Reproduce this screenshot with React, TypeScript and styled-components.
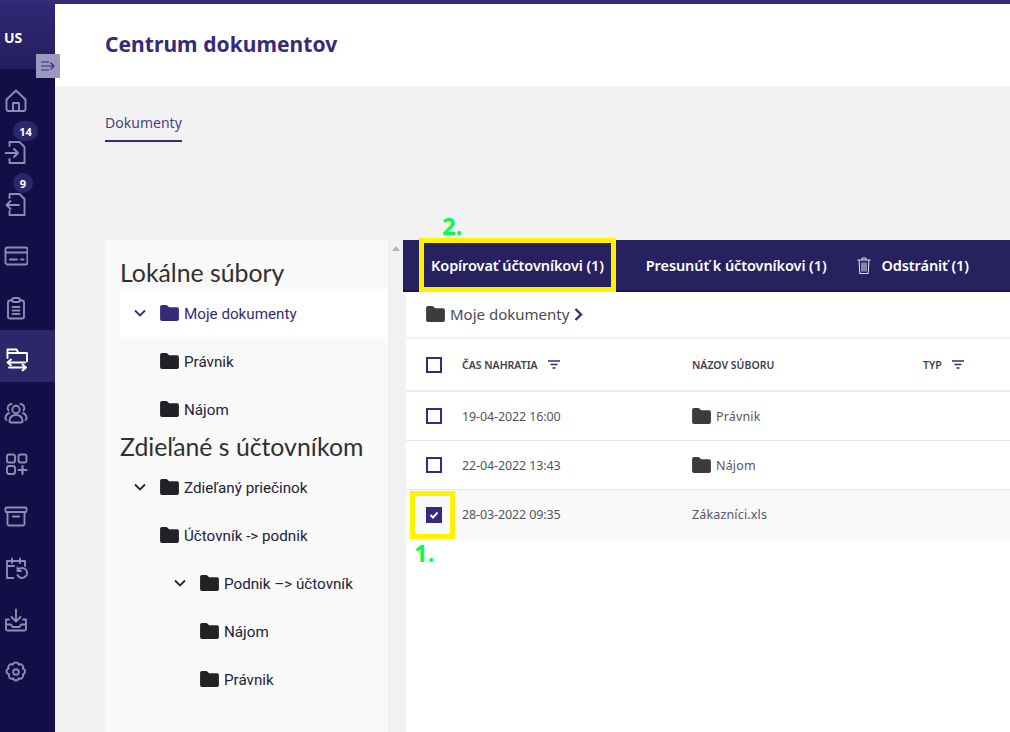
import React from "react"
import styled, { createGlobalStyle } from "styled-components"

const GlobalStyle = createGlobalStyle`
	html, body {
		margin: 0;
		height: 100%;
		overflow: hidden;
		background: #f2f2f2;
		font-family: "Noto Sans", "Liberation Sans", sans-serif;
	}
	* { box-sizing: border-box; }
`

const Page = styled.div`
	position: relative;
	display: flex;
	width: 1010px;
	height: 732px;
	overflow: hidden;
	border-top: 4px solid #352b78;
`

const Sidebar = styled.nav`
	position: relative;
	flex: none;
	width: 55px;
	background: #130e47;
`

const UserBlock = styled.div`
	display: flex;
	align-items: center;
	height: 65px;
	padding: 1px 0 0 4px;
	margin-bottom: 1px;
	background: linear-gradient(#2f2872, #251f60);
	color: #fff;
	font-size: 14px;
	font-weight: 700;
`

const Collapse = styled.div`
	position: absolute;
	top: 50px;
	left: 36px;
	display: flex;
	align-items: center;
	justify-content: center;
	width: 24px;
	height: 24px;
	background: #9c98c0;
	color: #352b78;
`

const NavItem = styled.div<{ $active?: boolean }>`
	position: relative;
	display: flex;
	align-items: center;
	height: 52px;
	padding: 7px 0 0 4px;
	background: ${p => (p.$active ? "#2d2669" : "transparent")};
	color: ${p => (p.$active ? "#ffffff" : "#8f8bb3")};
`

const Badge = styled.span<{ $wide?: boolean }>`
	position: absolute;
	top: -1px;
	left: 13px;
	display: flex;
	align-items: center;
	justify-content: center;
	width: ${p => (p.$wide ? 25 : 20)}px;
	height: 20px;
	border-radius: 10px;
	background: #2d2669;
	color: #fff;
	font-size: 11px;
	font-weight: 700;
`

const Main = styled.div`
	flex: 1;
	min-width: 0;
	display: flex;
	flex-direction: column;
`

const Header = styled.header`
	flex: none;
	display: flex;
	align-items: center;
	height: 82px;
	padding: 0 0 0 50px;
	background: #fff;
`

const Title = styled.h1`
	margin: 0 0 2px;
	color: #352b78;
	font-size: 21px;
	font-weight: 700;
	letter-spacing: 0.05px;
`

const Tabs = styled.div`
	flex: none;
	height: 154px;
	padding: 25px 0 0 50px;
`

const Tab = styled.span`
	display: inline-block;
	padding-bottom: 8px;
	border-bottom: 2px solid #352b78;
	color: #4a4280;
	font-size: 14px;
	line-height: 19px;
	letter-spacing: 0.02px;
`

const Content = styled.div`
	flex: 1;
	min-height: 0;
	display: flex;
	padding-left: 50px;
`

const TreePanel = styled.aside`
	flex: none;
	width: 283px;
	padding-left: 15px;
	background: #f9f9f9;
`

const TreeHeading = styled.h2`
	margin: 0;
	padding-bottom: 2px;
	color: #303030;
	font-family: Lato, sans-serif;
	font-size: 24.8px;
	font-weight: 400;
	line-height: 28px;
	white-space: nowrap;
`

const FirstHeading = styled(TreeHeading)`
	padding-top: 19px;
`

const TreeRow = styled.div<{ $depth?: number; $active?: boolean }>`
	display: flex;
	align-items: center;
	height: 48px;
	padding-left: ${p => (p.$depth ?? 0) * 40}px;
	background: ${p => (p.$active ? "#fff" : "transparent")};
	color: ${p => (p.$active ? "#352b78" : "#23223a")};
	font-family: Roboto, sans-serif;
	font-size: 15.2px;
	white-space: nowrap;
`

const Twist = styled.span`
	flex: none;
	display: flex;
	justify-content: center;
	width: 40px;
`

const TreeLabel = styled.span`
	margin-left: 5px;
	padding-top: 2px;
`

const ScrollTrack = styled.div`
	flex: none;
	display: flex;
	justify-content: center;
	width: 15px;
	padding-top: 6px;
	background: #f1f1f1;
`

const ScrollArrow = styled.span`
	width: 0;
	height: 0;
	border-left: 4px solid transparent;
	border-right: 4px solid transparent;
	border-bottom: 5px solid #b5b5b5;
`

const Files = styled.section`
	flex: 1;
	min-width: 0;
	display: flex;
	flex-direction: column;
`

const Toolbar = styled.div`
	flex: none;
	display: flex;
	align-items: center;
	gap: 42px;
	height: 52px;
	padding: 0 0 0 28px;
	background: #27215f;
	border-bottom: 2px solid #1a1650;
`

const ToolButton = styled.span`
	display: flex;
	align-items: center;
	gap: 10px;
	color: #fff;
	font-size: 14.5px;
	font-weight: 600;
	letter-spacing: -0.1px;
	white-space: nowrap;
`

const DeleteButton = styled(ToolButton)`
	margin-left: -11px;
`

const FileBody = styled.div`
	flex: 1;
	background: #fff;
	border-left: 3px solid #f2f2f2;
`

const Crumbs = styled.div`
	display: flex;
	align-items: center;
	gap: 5px;
	height: 47px;
	padding: 0 0 1px 20px;
	border-bottom: 2px solid #f2f2f2;
	color: #4a4a55;
	font-size: 15px;
`

const HeadRow = styled.div`
	display: grid;
	grid-template-columns: 36px 230px 231px 1fr;
	align-items: center;
	height: 53px;
	padding-left: 20px;
	border-bottom: 2px solid #ececec;
	color: #3f3f4c;
	font-size: 10.5px;
	font-weight: 600;
`

const HeadCell = styled.span`
	display: flex;
	align-items: center;
	gap: 10px;
	white-space: nowrap;
`

const Row = styled.div<{ $selected?: boolean }>`
	display: grid;
	grid-template-columns: 36px 230px 231px 1fr;
	align-items: center;
	height: 49px;
	padding-left: 20px;
	border-bottom: ${p => (p.$selected ? "none" : "1px solid #e6e6e6")};
	background: ${p => (p.$selected ? "#f9f9f9" : "#fff")};
	color: #55555f;
	font-size: 12.5px;
`

const TimeCell = styled.span`
	letter-spacing: -0.12px;
`

const NameCell = styled.span`
	display: flex;
	align-items: center;
	gap: 5px;
	letter-spacing: 0.15px;
`

const Check = styled.span<{ $on?: boolean }>`
	display: flex;
	align-items: center;
	justify-content: center;
	width: 16px;
	height: 16px;
	border: 2px solid #352b78;
	background: ${p => (p.$on ? "#352b78" : "#fff")};
`

const Highlight = styled.div`
	position: absolute;
	border: 5px solid #fff200;
`

const ToolHighlight = styled(Highlight)`
	top: 234px;
	left: 419px;
	width: 197px;
	height: 54px;
`

const CheckHighlight = styled(Highlight)`
	top: 487px;
	left: 410px;
	width: 45px;
	height: 48px;
`

const Step = styled.span`
	position: absolute;
	color: #00ff48;
	font-size: 24px;
	font-weight: 700;
	line-height: 24px;
`

const StepOne = styled(Step)`
	top: 537px;
	left: 414px;
`

const StepTwo = styled(Step)`
	top: 210px;
	left: 442px;
`

const Svg = ({ children }: { children: React.ReactNode }) => (
	<svg
		width={24}
		height={24}
		viewBox="0 0 24 24"
		fill="none"
		stroke="currentColor"
		strokeWidth="1.9"
		strokeLinecap="round"
		strokeLinejoin="round"
	>
		{children}
	</svg>
)

const navIcons: { icon: React.ReactNode; badge?: string; active?: boolean }[] = [
	{
		icon: <path d="M2.5 11.5 12 2.5l9.5 9V21a2 2 0 0 1-2 2h-15a2 2 0 0 1-2-2zM9 23v-8h6v8" />
	},
	{
		badge: "14",
		icon: (
			<>
				<path d="M5.5 6V2h10l5 5v16h-15v-4" />
				<path d="M1.5 13H14M10 9l4 4-4 4" />
			</>
		)
	},
	{
		badge: "9",
		icon: (
			<>
				<path d="M5.5 6V2h10l5 5v16h-15v-4" />
				<path d="M15 13H2.5M6.5 9l-4 4 4 4" />
			</>
		)
	},
	{
		icon: (
			<>
				<rect x="1.5" y="3.5" width="22" height="17" rx="2" />
				<path d="M1.5 8.5h22" strokeWidth="2" />
				<path d="M6 15.5h7M17 15.5h2.5" strokeWidth="2" />
			</>
		)
	},
	{
		icon: (
			<>
				<path d="M8 4.5H6a2 2 0 0 0-2 2v14a2 2 0 0 0 2 2h12a2 2 0 0 0 2-2v-14a2 2 0 0 0-2-2h-2" />
				<rect x="8" y="2" width="8" height="4" rx="2" />
				<path d="M8.5 11h7M8.5 14.5h7M8.5 18h7" />
			</>
		)
	},
	{
		active: true,
		icon: (
			<>
				<path d="M3.5 10V1.5h9l2 3.5h8.5v8.5" />
				<path d="M3.5 5h11" />
				<path d="M21 14.5H3.5M7 11.5l-3.5 3 3.5 3" />
				<path d="M5 19.5h17M18.5 16.5l3.5 3-3.5 3" />
			</>
		)
	},
	{
		icon: (
			<>
				<circle cx="12" cy="9.5" r="3.7" />
				<path d="M5.5 21.5c0-4.5 3-6.500 6.500-6.500s6.500 2 6.500 6.500c0 1-1 1-2 1h-9c-1 0-2 0-2-1z" />
				<path d="M7.5 4a4 4 0 0 0-3 6.500M16.500 4a4 4 0 0 1 3 6.500M5 13c-2.500 1-3.500 3-3.500 5.500 0 .7.3 1.200 1 1.500M19 13c2.500 1 3.500 3 3.500 5.500 0 .7-.3 1.200-1 1.500" />
			</>
		)
	},
	{
		icon: (
			<>
				<rect x="3" y="2.5" width="8" height="8" rx="2" />
				<rect x="14.5" y="2.5" width="8" height="8" rx="2" />
				<rect x="3" y="14" width="8" height="8" rx="2" />
				<path d="M18.5 14v8M14.5 18h8" strokeWidth="2.2" />
			</>
		)
	},
	{
		icon: (
			<>
				<rect x="1.5" y="3.5" width="21" height="4.5" rx="1" />
				<path d="M3.5 8v12A1.5 1.5 0 0 0 5 21.5h14a1.5 1.5 0 0 0 1.500-1.500V8" />
				<path d="M9 12.5h6" strokeWidth="2.2" />
			</>
		)
	},
	{
		icon: (
			<>
				<path d="M9.5 22H3V5h18v5M8 2.5V7M16 2.5V7M3 10h7" />
				<path d="M14 14a5 5 0 1 1-.5 5M13.500 11.500v3.500H17" />
			</>
		)
	},
	{
		icon: (
			<>
				<path d="M12 1.5V13M7.5 9l4.500 4.500L16.500 9" />
				<path d="M5 11.500H2V21a1.500 1.500 0 0 0 1.500 1.500h17A1.500 1.500 0 0 0 22 21v-9.500h-3M2 16.500h5l1.500 2.500h7l1.500-2.500h5" />
			</>
		)
	},
	{
		icon: (
			<>
				<circle cx="12" cy="12" r="2.8" />
				<path d="M12 2.5c1.500 0 2.500 1 2.800 2.200 1.100-.6 2.500-.5 3.500.5s1.100 2.400.5 3.500c1.200.3 2.200 1.300 2.200 2.800s-1 2.500-2.200 2.800c.6 1.100.5 2.500-.5 3.500s-2.400 1.100-3.500.5c-.3 1.200-1.300 2.200-2.800 2.200s-2.500-1-2.800-2.200c-1.100.6-2.500.5-3.500-.5s-1.100-2.400-.5-3.500C3.500 14 2.500 13 2.500 11.500S3.500 9 4.700 8.700c-.6-1.100-.5-2.500.5-3.500s2.400-1.100 3.500-.5C9 3.500 10.500 2.500 12 2.500z" />
			</>
		)
	}
]

// solid folder used in the tree and in the table
const Folder = ({ color = "#222226" }: { color?: string }) => (
	<svg width="19" height="16" viewBox="0 0 20 17">
		<path
			fill={color}
			d="M0 2a2 2 0 0 1 2-2h4.500a2 2 0 0 1 1.500.7L9.500 2.500H18a2 2 0 0 1 2 2V15a2 2 0 0 1-2 2H2a2 2 0 0 1-2-2z"
		/>
	</svg>
)

const Chevron = ({ color = "#23223a" }: { color?: string }) => (
	<svg width="12" height="8" viewBox="0 0 12 8" fill="none">
		<path d="M1 1.500 6 6.500l5-5" stroke={color} strokeWidth="1.800" />
	</svg>
)

const SortIcon = () => (
	<svg width="12" height="9" viewBox="0 0 12 9" fill="none" stroke="#352b78" strokeWidth="1.300">
		<path d="M0 1h12M2.500 4.500h7M4.500 8h3" />
	</svg>
)

const TrashIcon = () => (
	<svg width="14" height="17" viewBox="0 0 14 17" fill="none" stroke="#e9e6f2" strokeWidth="1">
		<path d="M.5 3h13M5 3V1h4v2M2 3l.8 13.500h8.400L12 3M5 5.500V14.500M7 5.500V14.500M9 5.500V14.500" />
	</svg>
)

const tree: { label: string; depth?: number; open?: boolean }[] = [
	{ label: "Zdieľaný priečinok", open: true },
	{ label: "Účtovník -> podnik" },
	{ label: "Podnik –> účtovník", depth: 1, open: true },
	{ label: "Nájom", depth: 1 },
	{ label: "Právnik", depth: 1 }
]

function TreeItem({ label, depth, open, active }: { label: string; depth?: number; open?: boolean; active?: boolean }) {
	return (
		<TreeRow $depth={depth} $active={active}>
			<Twist>{open && <Chevron color={active ? "#352b78" : "#23223a"} />}</Twist>
			<Folder color={active ? "#352b78" : "#222226"} />
			<TreeLabel>{label}</TreeLabel>
		</TreeRow>
	)
}

export default function App() {
	return (
		<Page>
			<GlobalStyle />
			<Sidebar>
				<UserBlock>US</UserBlock>
				<Collapse>
					<svg width="14" height="12" viewBox="0 0 14 12" fill="none" stroke="currentColor" strokeWidth="1.100">
						<path d="M0 2h8M0 6h13M0 10h8M9.500 2.500 13 6l-3.500 3.500" />
					</svg>
				</Collapse>
				{navIcons.map((item, i) => (
					<NavItem key={i} $active={item.active}>
						{item.badge && <Badge $wide={item.badge.length > 1}>{item.badge}</Badge>}
						<Svg>{item.icon}</Svg>
					</NavItem>
				))}
			</Sidebar>
			<Main>
				<Header>
					<Title>Centrum dokumentov</Title>
				</Header>
				<Tabs>
					<Tab>Dokumenty</Tab>
				</Tabs>
				<Content>
					<TreePanel>
						<FirstHeading>Lokálne súbory</FirstHeading>
						<TreeItem label="Moje dokumenty" open active />
						<TreeItem label="Právnik" />
						<TreeItem label="Nájom" />
						<TreeHeading>Zdieľané s účtovníkom</TreeHeading>
						{tree.map(t => (
							<TreeItem key={t.label} {...t} />
						))}
					</TreePanel>
					<ScrollTrack>
						<ScrollArrow />
					</ScrollTrack>
					<Files>
						<Toolbar>
							<ToolButton>Kopírovať účtovníkovi (1)</ToolButton>
							<ToolButton>Presunúť k účtovníkovi (1)</ToolButton>
							<DeleteButton>
								<TrashIcon />
								Odstrániť (1)
							</DeleteButton>
						</Toolbar>
						<FileBody>
							<Crumbs>
								<Folder color="#3c3c3c" />
								Moje dokumenty
								<svg width="9" height="13" viewBox="0 0 9 13" fill="none">
									<path d="M1.500 1 7 6.500 1.500 12" stroke="#352b78" strokeWidth="2.400" />
								</svg>
							</Crumbs>
							<HeadRow>
								<Check />
								<HeadCell>
									ČAS NAHRATIA <SortIcon />
								</HeadCell>
								<HeadCell>NÁZOV SÚBORU</HeadCell>
								<HeadCell>
									TYP <SortIcon />
								</HeadCell>
							</HeadRow>
							<Row>
								<Check />
								<TimeCell>19-04-2022 16:00</TimeCell>
								<NameCell>
									<Folder color="#3c3c3c" />
									Právnik
								</NameCell>
							</Row>
							<Row>
								<Check />
								<TimeCell>22-04-2022 13:43</TimeCell>
								<NameCell>
									<Folder color="#3c3c3c" />
									Nájom
								</NameCell>
							</Row>
							<Row $selected>
								<Check $on>
									<svg width="10" height="8" viewBox="0 0 10 8" fill="none">
										<path d="M1.500 4 4 6.500 8.500 1.500" stroke="#fff" strokeWidth="2" />
									</svg>
								</Check>
								<TimeCell>28-03-2022 09:35</TimeCell>
								<NameCell>Zákazníci.xls</NameCell>
							</Row>
						</FileBody>
					</Files>
				</Content>
				<ToolHighlight />
				<CheckHighlight />
				<StepOne>1.</StepOne>
				<StepTwo>2.</StepTwo>
			</Main>
		</Page>
	)
}
